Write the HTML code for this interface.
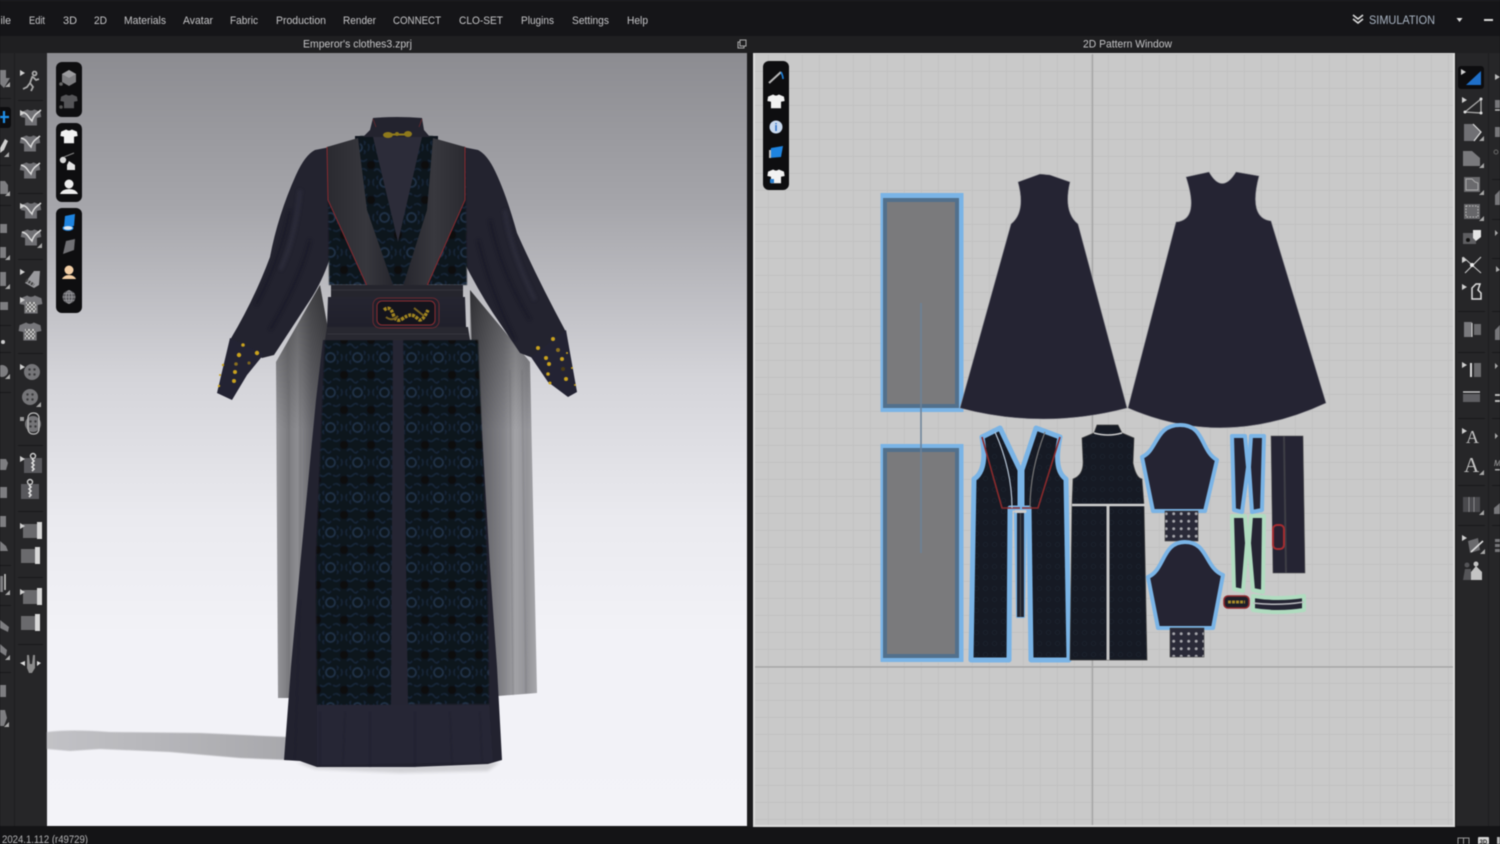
<!DOCTYPE html>
<html><head><meta charset="utf-8"><title>CLO3D</title>
<style>
html,body{margin:0;padding:0;background:#141416;width:1500px;height:844px;overflow:hidden}
svg{display:block;position:absolute;left:0;top:0;filter:blur(.4px)}
text{font-family:"Liberation Sans",sans-serif}
</style></head><body>
<svg width="1500" height="844" viewBox="0 0 1500 844" xmlns="http://www.w3.org/2000/svg">
<defs>
<filter id="sf" x="-5%" y="-5%" width="110%" height="110%"><feGaussianBlur stdDeviation=".4"/></filter>
<filter id="sf2" x="-20%" y="-20%" width="140%" height="140%"><feGaussianBlur stdDeviation="1.6"/></filter>
<linearGradient id="vp" x1="0" y1="0" x2="0" y2="1"><stop offset="0" stop-color="#8c8c91"/><stop offset=".2" stop-color="#a6a6ab"/><stop offset=".42" stop-color="#d4d4d9"/><stop offset=".6" stop-color="#eaeaef"/><stop offset=".75" stop-color="#f2f2f7"/><stop offset="1" stop-color="#f3f3f8"/></linearGradient>
<linearGradient id="capeL" x1="0" y1="0" x2="1" y2="0"><stop offset="0" stop-color="#97979b"/><stop offset=".22" stop-color="#7c7c80"/><stop offset=".4" stop-color="#8d8d91"/><stop offset=".65" stop-color="#68686d"/><stop offset="1" stop-color="#4c4c52"/></linearGradient>
<linearGradient id="capeR" x1="0" y1="0" x2="1" y2="0"><stop offset="0" stop-color="#4c4c52"/><stop offset=".3" stop-color="#6e6e73"/><stop offset=".5" stop-color="#838388"/><stop offset=".68" stop-color="#a2a2a6"/><stop offset=".85" stop-color="#929297"/><stop offset="1" stop-color="#a8a8ac"/></linearGradient>
<linearGradient id="capeTop" gradientUnits="userSpaceOnUse" x1="0" y1="285" x2="0" y2="430"><stop offset="0" stop-color="#000" stop-opacity=".38"/><stop offset="1" stop-color="#000" stop-opacity="0"/></linearGradient>
<linearGradient id="shad" x1="0" y1="0" x2="1" y2="0"><stop offset="0" stop-color="#c2c2c6"/><stop offset="1" stop-color="#a8a8ac"/></linearGradient>
<linearGradient id="lapL" x1="0" y1="0" x2="1" y2="0"><stop offset="0" stop-color="#2a2a30"/><stop offset=".6" stop-color="#37373d"/><stop offset="1" stop-color="#26262d"/></linearGradient>
<linearGradient id="lapR" x1="0" y1="0" x2="1" y2="0"><stop offset="0" stop-color="#26262d"/><stop offset=".5" stop-color="#38383e"/><stop offset="1" stop-color="#2a2a30"/></linearGradient>
<linearGradient id="belt" x1="0" y1="0" x2="0" y2="1"><stop offset="0" stop-color="#252531"/><stop offset="1" stop-color="#20202b"/></linearGradient>
<pattern id="lace" width="27" height="35" patternUnits="userSpaceOnUse" x="317" y="340">
<rect width="27" height="35" fill="#0d121b"/>
<circle cx="13.5" cy="17.5" r="4.5" fill="none" stroke="#2e4460" stroke-width="1"/>
<path d="M3 6q3-4 6 0t5 0M16 5q4-3 7 1M3 30q3 3 6 0t5 0M16 30q4 3 7-1M3 14q-2 3 0 7M24 14q2 3 0 7M7 11q-2 2 0 4M20 11q2 2 0 4M7 24q-2-2 0-4M20 24q2-2 0-4" fill="none" stroke="#213348" stroke-width=".9"/>
<circle cx="0" cy="0" r="4" fill="#070a11"/><circle cx="27" cy="0" r="4" fill="#070a11"/><circle cx="0" cy="35" r="4" fill="#070a11"/><circle cx="27" cy="35" r="4" fill="#070a11"/>
</pattern>
<pattern id="lace2" width="9" height="11" patternUnits="userSpaceOnUse">
<rect width="9" height="11" fill="#161a24"/><circle cx="4.5" cy="5.5" r="2.2" fill="none" stroke="#1c2430" stroke-width=".7"/>
</pattern>
<pattern id="dots" width="7.5" height="7.5" patternUnits="userSpaceOnUse">
<rect width="7.5" height="7.5" fill="#2a2a38"/><circle cx="3.7" cy="3.7" r="1.5" fill="#a5a5ab"/>
</pattern>
<pattern id="grid" width="17" height="17" patternUnits="userSpaceOnUse" x="3" y="3">
<rect width="17" height="17" fill="#c9c9c9"/><path d="M0 0H17M0 0V17" stroke="#bfbfbf" stroke-width="1.4"/>
</pattern>
<pattern id="chk" width="4" height="4" patternUnits="userSpaceOnUse"><rect width="4" height="4" fill="#666"/><rect width="2" height="2" fill="#ccc"/><rect x="2" y="2" width="2" height="2" fill="#ccc"/></pattern>

<path id="tl" d="M0 0L5 3 0 6Z" fill="#d0d0d0"/>
<path id="br" d="M0 5L5 5 5 0Z" fill="#a8a8a8"/>
<path id="sh" d="M-11-6L-4-9Q0-6 4-9L11-6 12 0 7 1 7 10-7 10-7 1-12 0Z"/>
<g id="nd"><use href="#sh" transform="scale(.85)" fill="#707074"/><path d="M-9-5Q-5-4-3-1T1 4Q2 0 5-3L10-7" fill="none" stroke="#dcdcdc" stroke-width="1.5"/></g>
<g id="roll"><rect x="-10" y="-7" width="14" height="14" fill="#6a6a6d"/><rect x="4" y="-9" width="5" height="17" fill="#d8d8d8"/></g>
<g id="btn"><circle r="8" fill="#757578"/><circle cx="-2.5" cy="-2.5" r="1.2" fill="#3a3a3c"/><circle cx="2.5" cy="-2.5" r="1.2" fill="#3a3a3c"/><circle cx="-2.5" cy="2.5" r="1.2" fill="#3a3a3c"/><circle cx="2.5" cy="2.5" r="1.2" fill="#3a3a3c"/></g>
<g id="zip"><rect x="-9" y="-7" width="18" height="15" fill="#58585c"/><circle cy="-9" r="2.5" fill="none" stroke="#ccc" stroke-width="1.4"/><path d="M-1-6L1-4-1-2 1 0-1 2 1 4-1 6" fill="none" stroke="#ddd" stroke-width="1.6"/></g>
<g id="csh"><use href="#sh" transform="scale(.95)" fill="#77777b"/><rect x="-5" y="-2" width="10" height="10" fill="url(#chk)"/></g>
</defs>

<!-- frame -->
<rect width="1500" height="844" fill="#141416"/>
<rect width="1500" height="36" fill="#151518"/>
<rect y="0" width="1500" height="1" fill="#202024"/>
<rect y="36" width="1500" height="17" fill="#1f1f21"/>

<!-- left toolbar -->
<rect x="0" y="53" width="47" height="773" fill="#262628"/>
<rect x="14" y="53" width="1" height="773" fill="#1d1d1f"/>
<g fill="#18181a">
<rect x="0" y="98" width="11" height="1"/><rect x="0" y="165" width="11" height="1"/><rect x="0" y="205" width="11" height="1"/><rect x="0" y="325" width="11" height="1"/><rect x="0" y="352" width="11" height="1"/><rect x="0" y="392" width="11" height="1"/><rect x="0" y="565" width="11" height="1"/><rect x="0" y="605" width="11" height="1"/><rect x="0" y="672" width="11" height="1"/>
<rect x="18" y="100" width="25" height="1"/><rect x="18" y="193" width="25" height="1"/><rect x="18" y="259" width="25" height="1"/><rect x="18" y="353" width="25" height="1"/><rect x="18" y="445" width="25" height="1"/><rect x="18" y="511" width="25" height="1"/><rect x="18" y="577" width="25" height="1"/><rect x="18" y="644" width="25" height="1"/>
</g>
<!-- column 1 -->
<rect x="-4" y="107" width="15" height="21" rx="3" fill="#0d0d0f"/>
<path d="M0 117H9M4 111V123" stroke="#1f8fe8" stroke-width="2.2"/>
<g fill="#7d7d80">
<path d="M0 70H6V78H10L4 88 0 84Z"/>
<path d="M0 148L5 139 8 141 4 150 0 153Z" fill="#cfcfcf"/>
<path d="M0 181H5L8 185V194H0Z"/>
<path d="M0 224H7V233H0Z"/><path d="M0 247H6V258H0Z"/><path d="M0 272H6V286H0Z"/><path d="M0 302H8V310H0Z"/>
<circle cx="3" cy="342" r="2" fill="#ccc"/>
<circle cx="2" cy="371" r="6"/>
<path d="M0 459H6L8 463 6 470H0Z"/><path d="M0 487H7V498H0Z"/><path d="M0 516H6V527H0Z"/><path d="M0 541L6 546 8 551H0Z"/>
<path d="M0 576H3V592H0Z"/><path d="M0 620L9 627 8 632 0 628Z"/><path d="M0 644L7 650 6 656 0 652Z"/><path d="M0 685H6V697H0Z"/><path d="M0 710H5L7 718 4 726H0Z"/>
</g>
<path d="M5 574V590" stroke="#ccc" stroke-width="1.5"/>
<g fill="#a8a8a8">
<use href="#br" x="5" y="82"/><use href="#br" x="4" y="152"/><use href="#br" x="5" y="191"/><use href="#br" x="5" y="255"/><use href="#br" x="5" y="284"/><use href="#br" x="5" y="374"/><use href="#br" x="5" y="590"/><use href="#br" x="5" y="655"/><use href="#br" x="4" y="722"/>
</g>

<!-- column 2 icons -->
<use href="#tl" x="20" y="70"/>
<path d="M34.500 71.500a2 2 0 1 0 .1 0M32.500 76L30 83 33 87 31 91M30 83L27 87 23 89M33 77L36 80 39 79" fill="none" stroke="#a8a8a8" stroke-width="1.8"/>
<use href="#nd" transform="translate(31,117)"/><use href="#tl" x="20" y="110"/>
<use href="#nd" transform="translate(30,143)"/>
<use href="#nd" transform="translate(30,170)"/>
<use href="#nd" transform="translate(31,210)"/><use href="#tl" x="20" y="203"/>
<use href="#nd" transform="translate(31,237)"/><use href="#br" x="37" y="243"/>
<use href="#tl" x="20" y="269"/>
<path d="M25 283L34 271 40 271 39 285 34 288Z" fill="#9a9a9e"/><path d="M26 280L34 285" stroke="#444" stroke-width="3" stroke-dasharray="2 1"/>
<use href="#csh" transform="translate(31,304)"/><use href="#tl" x="20" y="297"/>
<use href="#csh" transform="translate(30,331)"/>
<use href="#btn" transform="translate(32,372)"/><use href="#tl" x="20" y="364"/>
<use href="#btn" transform="translate(30,397)"/><use href="#br" x="36" y="402"/>
<use href="#btn" transform="translate(33,424)"/><rect x="28" y="413" width="11" height="21" rx="5" fill="none" stroke="#bbb" stroke-width="1.2"/>
<rect x="20" y="417" width="4" height="4" fill="#999"/>
<use href="#zip" transform="translate(33,465)"/><use href="#tl" x="20" y="456"/>
<use href="#zip" transform="translate(30,491)"/>
<use href="#roll" transform="translate(33,531)"/><use href="#tl" x="20" y="523"/>
<use href="#roll" transform="translate(31,556)"/>
<use href="#roll" transform="translate(33,597)"/><use href="#tl" x="20" y="589"/>
<use href="#roll" transform="translate(31,623)"/>
<path d="M27 655L29 655 30 664 32 664 33 655 35 655 35 668 32 673 29 673 27 668Z" fill="#8c8c8c"/><path d="M20 663L25 661V666ZM41 663L37 661V666Z" fill="#ddd"/>

<!-- 3D viewport -->
<rect x="47" y="53" width="700" height="773" fill="url(#vp)"/>
<path d="M47 732Q70 729 110 732L200 733 288 737V760L240 758 170 752 100 749 70 751 47 749Z" fill="url(#shad)" filter="url(#sf)"/>
<path d="M296 762H500L488 771 400 773 315 769Z" fill="#d0d0d4" filter="url(#sf2)"/>

<!-- capes -->
<path d="M320 285L276 362 278 698 296 698 330 340Z" fill="url(#capeL)"/>
<path d="M470 290L530 362 537 693 498 696 480 600Z" fill="url(#capeR)"/>
<path d="M320 285L276 362 277 430H330V340ZM470 290L530 362 532 430H470Z" fill="url(#capeTop)"/>
<path d="M289 380V697M300 360V697M510 370L513 695M522 370L526 693" stroke="#5f5f64" stroke-width="1.2" opacity=".3" filter="url(#sf)"/>

<!-- robe -->
<path d="M323 340L472 340 480 400 490 567 497 667 502 760 488 764 413 767 317 767 300 761 284 760 291 667 300 567 316 400Z" fill="#22222f"/>
<g filter="url(#sf)">
<path d="M325 340H393V705H317L316 560Z" fill="url(#lace)"/>
<path d="M403 340H478L487 560 489 704H405Z" fill="url(#lace)"/>
</g>
<path d="M393 340H403L408 705H391Z" fill="#252533"/>
<path d="M317 705H489L493 762 317 765Z" fill="#262635"/>
<path d="M320 712V765M345 712L343 765M370 712V767M415 712V767M450 712L452 765M480 712L482 762M300 600L295 760" stroke="#1c1c2a" stroke-width="1.5" opacity=".35" filter="url(#sf)"/>

<!-- sleeves -->
<path d="M315 150L330 147 330 258Q322 282 310 300L274 355 262 358 230 340Q254 300 270 257 278 215 296 175 305 155 315 150Z" fill="#23232f"/>
<path d="M478 150L463 147 463 260Q478 290 493 313L520 353 533 358 566 332Q538 280 517 233 505 190 493 167 486 154 478 150Z" fill="#23232f"/>
<path d="M290 210Q280 260 256 305M310 240Q300 280 270 330M490 220Q500 270 530 320M478 240Q490 290 515 340" stroke="#191923" stroke-width="3" fill="none" opacity=".6" filter="url(#sf2)"/>
<path d="M300 190Q295 240 280 270M505 210Q510 250 535 300" stroke="#2e2e3c" stroke-width="4" fill="none" opacity=".8" filter="url(#sf2)"/>
<path d="M230 338L264 354 247 375 232 400 217 393Z" fill="#232333"/>
<path d="M531 357L566 330 577 392 568 397 548 382Z" fill="#232333"/>
<g fill="#c9a21e">
<circle cx="239" cy="355" r="2.2"/><circle cx="243" cy="345" r="1.8"/><circle cx="257" cy="353" r="2.2"/><circle cx="235" cy="372" r="2"/><circle cx="234" cy="381" r="2"/><circle cx="249" cy="363" r="1.6" fill="#7a6420"/><circle cx="223" cy="365" r="1.2"/><circle cx="219" cy="386" r="1.2"/><circle cx="236" cy="364" r="1.8" fill="#8a7020"/><circle cx="220" cy="375" r="1"/>
<circle cx="538" cy="348" r="2"/><circle cx="553" cy="339" r="2"/><circle cx="558" cy="350" r="2" fill="#8a7020"/><circle cx="562" cy="359" r="2"/><circle cx="546" cy="358" r="2"/><circle cx="549" cy="364" r="2"/><circle cx="563" cy="369" r="2" fill="#4a3c14"/><circle cx="566" cy="379" r="2"/><circle cx="548" cy="374" r="1.8"/><circle cx="550" cy="383" r="1.5"/><circle cx="575" cy="385" r="1"/><circle cx="567" cy="353" r="1"/><circle cx="572" cy="368" r="1"/>
</g>

<!-- torso -->
<path d="M355 136H438V152H355Z" fill="#10151e"/>
<g filter="url(#sf)">
<path d="M328 147H465L467 285H329Z" fill="url(#lace)"/>
<path d="M360 136H433V160H360Z" fill="url(#lace)"/>
</g>
<path d="M373 118Q397 116 422 118L424 130 430 137 363 137 370 130Z" fill="#23232e"/>
<path d="M373 137H422L398 242Z" fill="#2c2c39"/>
<path d="M373 119L376 127M422 119L419 127" stroke="#6a2a30" stroke-width=".8"/>
<path d="M327 147L358 138 367 210 393 285 367 286 328 200Z" fill="url(#lapL)"/>
<path d="M433 138L465 147 465 200 427 286 403 286 427 210Z" fill="url(#lapR)"/>
<path d="M327 147L328 200 367 286M465 147L465 200 427 286" fill="none" stroke="#8a2a30" stroke-width="1"/>
<g fill="#8f7a1c"><ellipse cx="388" cy="135" rx="5" ry="3"/><ellipse cx="408" cy="134" rx="4" ry="3"/><rect x="392" y="133.500" width="13" height="2"/><circle cx="397" cy="134" r="2"/></g>

<!-- belt -->
<rect x="331" y="285" width="132" height="12" fill="#25252d"/>
<path d="M328 297H465L466 327H327Z" fill="url(#belt)"/>
<path d="M327 327H468L470 340H325Z" fill="#282830"/>
<path d="M331 290H463M327 334H468" stroke="#34343c" stroke-width="1"/>
<rect x="373" y="298" width="66" height="30" rx="7" fill="#1f1f2a" stroke="#6a2a30" stroke-width="1"/>
<rect x="377" y="301" width="58" height="24" rx="5" fill="#14141c" stroke="#8a2c32" stroke-width="1"/>
<path d="M384 310Q390 305 393 314T402 319 411 315 418 319 428 310" fill="none" stroke="#a08420" stroke-width="3.5" stroke-dasharray="3 1"/>
<path d="M386 317Q392 322 398 316M414 308L424 316" fill="none" stroke="#7a6420" stroke-width="2"/>

<!-- gap / 2D tab -->
<rect x="747" y="53" width="6" height="774" fill="#1a1a1c"/>

<!-- 2D window -->
<rect x="753" y="53" width="702" height="774" fill="#dcdcdc"/>
<rect x="755" y="54" width="698" height="771" fill="url(#grid)"/>
<path d="M1092.500 54V825M755 667H1453" stroke="#a2a2a2" stroke-width="1.2"/>

<!-- rects -->
<g>
<rect x="880.500" y="193" width="83" height="219" fill="#7ab4e6"/>
<rect x="883" y="198" width="76" height="210" fill="#52708c"/>
<rect x="887" y="202" width="68" height="202" fill="#7a7a7c"/>
<rect x="880.500" y="444" width="83" height="218" fill="#7ab4e6"/>
<rect x="883" y="448" width="76" height="210" fill="#52708c"/>
<rect x="887" y="452" width="68" height="202" fill="#7a7a7c"/>
<path d="M921 303V553" stroke="#6a8299" stroke-width="1.5"/>
</g>

<!-- dresses -->
<path d="M1018 182L1040 174 1050 175 1070 182Q1063 212 1078 224L1127 408Q1043 430 960 408L1011 224Q1026 212 1018 182Z" fill="#252433" stroke="#8a8a90" stroke-width=".6"/>
<path d="M1186 177L1209 172Q1222 195 1236 172L1259 176Q1248 218 1271 221L1326 403Q1225 450 1128 408L1176 222Q1200 220 1186 177Z" fill="#252433" stroke="#8a8a90" stroke-width=".6"/>

<!-- vest -->
<g stroke="#7ab4e6" stroke-width="5" stroke-linejoin="round">
<path d="M982 437L1000 428 1020 470V508H1010L1009 660H971L974 479Q988 470 982 437Z" fill="url(#lace2)"/>
<path d="M1060 437L1036 428 1022 470V508H1029L1031 660H1069L1066 479Q1053 470 1060 437Z" fill="url(#lace2)"/>
<path d="M1015 513H1026L1024 617H1017Z" fill="#7ab4e6" stroke-width="2"/>
</g>
<rect x="1017" y="513" width="7" height="104" fill="#1e2330"/>
<path d="M1020.500 513V617" stroke="#555" stroke-width=".8"/>
<rect x="1015" y="510" width="11" height="3" fill="#ccc"/>
<path d="M982 437L1002 508H1020M1060 437L1038 508H1022" fill="none" stroke="#8a2a2c" stroke-width="1.6"/>
<path d="M995 432Q1012 470 1012 508" fill="none" stroke="#b5c4d5" stroke-width="1.2"/>
<path d="M1045 432Q1030 470 1030 508" fill="none" stroke="#777" stroke-width="1.2"/>

<!-- back -->
<path d="M1097 425H1118L1122 433 1134 438 1133 463Q1136 478 1142 479L1144 505 1147 660H1070L1072 505 1073 479Q1084 475 1083 460L1082 438 1094 433Z" fill="url(#lace2)" stroke="#444" stroke-width=".7"/>
<path d="M1094 433Q1108 437 1122 433" stroke="#ccc" stroke-width="1.5" fill="none"/>
<path d="M1072 505H1145" stroke="#d0d0d0" stroke-width="2.6"/>
<path d="M1108 506V660" stroke="#c4c4c4" stroke-width="3"/>

<!-- sleeves -->
<path d="M1142 457C1158 450 1155 425 1180 425C1205 425 1200 450 1217 460L1205 511H1153Z" fill="#252433" stroke="#7ab4e6" stroke-width="4" stroke-linejoin="round"/>
<rect x="1165" y="511" width="33" height="30" fill="url(#dots)" stroke="#444" stroke-width=".6"/>
<path d="M1148 577C1165 570 1162 542 1185 542C1208 542 1205 568 1223 575L1213 628H1158Z" fill="#252433" stroke="#7ab4e6" stroke-width="4" stroke-linejoin="round"/>
<rect x="1170" y="628" width="34" height="29" fill="url(#dots)" stroke="#444" stroke-width=".6"/>

<!-- right small parts -->
<g fill="#252433">
<g stroke="#7ab4e6" stroke-width="4" stroke-linejoin="round">
<path d="M1232 436H1245L1248 467 1242 512 1234 510Z"/>
<path d="M1251 436H1264L1262 510 1252 512 1249 467Z"/>
</g>
<g stroke="#b0dcc0" stroke-width="4" stroke-linejoin="round">
<path d="M1232 516H1245L1247 543 1243 591 1234 589Z"/>
<path d="M1251 516H1264L1263 592 1253 590 1249 543Z"/>
<path d="M1253 596Q1278 600 1304 596V610Q1278 614 1253 610Z"/>
</g>
<path d="M1271 436H1303L1305 573H1273Z" stroke="#555" stroke-width=".6"/>
</g>
<path d="M1284 436L1286 573" stroke="#3e3e46" stroke-width="2"/>
<path d="M1253 603Q1278 606 1304 602" stroke="#bcbcc0" stroke-width="1.5" fill="none"/>
<rect x="1273" y="525" width="11" height="24" rx="4" fill="#2a2030" stroke="#a52c30" stroke-width="2"/>
<rect x="1224" y="596" width="25" height="12" rx="4" fill="#1e1e28" stroke="#8f2a2e" stroke-width="1.6"/>
<path d="M1228 602H1245" stroke="#a88a2a" stroke-width="3" stroke-dasharray="3 1"/>

<!-- 3D floating toolbars -->
<g fill="#0e0e10">
<rect x="56" y="62" width="26" height="55" rx="6"/><rect x="56" y="123" width="26" height="79" rx="6"/><rect x="56" y="208" width="26" height="105" rx="6"/>
</g>
<path d="M69 70L76 74V82L69 86 62 82V74Z" fill="#7d7d80"/><path d="M69 70L76 74 69 78 62 74Z" fill="#9c9c9f"/><circle cx="61" cy="84" r="1.8" fill="#666"/>
<use href="#sh" transform="translate(69,101) scale(.72)" fill="#555558"/><circle cx="61" cy="107" r="1.8" fill="#555"/>
<use href="#sh" transform="translate(69,136) scale(.72)" fill="#f2f2f2"/>
<circle cx="63" cy="160" r="3.2" fill="#d8d8d8"/><path d="M69 161L75 165V170H67V165Z" fill="#e4e4e4"/><path d="M64 157L74 153" stroke="#888" stroke-width="1"/>
<circle cx="69" cy="184" r="4.500" fill="#eee"/><path d="M60 194Q62 189 69 189T78 194Z" fill="#eee"/>
<path d="M65 216L75 214 74 226 64 227Z" fill="#1e84e0"/><ellipse cx="68" cy="228" rx="5" ry="2.4" fill="#dfe9f2" stroke="#1e84e0"/>
<path d="M66 241L75 239 74 250 63 254Z" fill="#707074"/>
<circle cx="69" cy="270" r="4.500" fill="#f4cfa6"/><path d="M62 279Q64 275 69 275T76 279Z" fill="#f4cfa6"/>
<circle cx="69" cy="297" r="6.500" fill="#5a5a5e"/><g fill="none" stroke="#9a9a9e" stroke-width=".8"><ellipse cx="69" cy="297" rx="3" ry="6.500"/><path d="M62.500 297H75.500M63.500 293.500H74.500M63.500 300.500H74.500M69 290.500V303.500"/></g>

<!-- 2D floating toolbar -->
<rect x="763" y="61" width="26" height="129" rx="6" fill="#0e0e10"/>
<path d="M769 83L781 72" stroke="#b8b8b8" stroke-width="2"/><path d="M781 72Q783 76 783 79" stroke="#1e84e0" stroke-width="1.6" fill="none"/>
<use href="#sh" transform="translate(776,101) scale(.72)" fill="#f2f2f2"/>
<circle cx="776" cy="127" r="6.500" fill="#c9d9ee"/><text x="776" y="131" font-size="11" font-weight="bold" fill="#2b6fc8" text-anchor="middle">i</text>
<path d="M771 148L783 146 781 157 769 158Z" fill="#1e84e0"/><path d="M769 150H771V158H769Z" fill="#bbb"/>
<use href="#sh" transform="translate(776,176) scale(.72)" fill="#f2f2f2"/><rect x="770" y="179" width="4" height="4" fill="#2a7fd0"/>

<!-- right toolbar -->
<rect x="1456" y="53" width="44" height="773" fill="#262628"/>
<rect x="1488" y="53" width="1" height="773" fill="#1d1d1f"/>
<g fill="#18181a">
<rect x="1458" y="311" width="27" height="1"/><rect x="1458" y="352" width="27" height="1"/><rect x="1458" y="418" width="27" height="1"/><rect x="1458" y="485" width="27" height="1"/><rect x="1458" y="525" width="27" height="1"/>
<rect x="1492" y="179" width="8" height="1"/><rect x="1492" y="219" width="8" height="1"/><rect x="1492" y="258" width="8" height="1"/><rect x="1492" y="311" width="8" height="1"/><rect x="1492" y="352" width="8" height="1"/><rect x="1492" y="418" width="8" height="1"/><rect x="1492" y="485" width="8" height="1"/><rect x="1492" y="525" width="8" height="1"/>
</g>
<rect x="1458" y="66" width="26" height="23" rx="3" fill="#0d0d0f"/>
<path d="M1466 85L1481 71V85Z" fill="#1f6fc8"/><use href="#tl" x="1461" y="69"/>
<use href="#tl" x="1462" y="97"/><path d="M1465 112L1481 99V113Z" fill="none" stroke="#aaa" stroke-width="1.3"/><circle cx="1481" cy="99" r="1.5" fill="#ddd"/><circle cx="1481" cy="113" r="1.5" fill="#ddd"/><circle cx="1465" cy="112" r="1.5" fill="#ddd"/>
<path d="M1464 124H1473L1481 132 1474 141H1464Z" fill="#707074"/><path d="M1473 124L1481 132 1474 141" fill="none" stroke="#ddd" stroke-width="1.2"/><use href="#br" x="1479" y="136"/>
<path d="M1463 151H1472L1480 158V166H1463Z" fill="#79797c"/><use href="#br" x="1479" y="163"/>
<rect x="1464" y="177" width="16" height="15" fill="#6a6a6d"/><path d="M1466 179H1472L1475 182 1478 183V190H1466Z" fill="none" stroke="#aaa"/><use href="#br" x="1479" y="190"/>
<rect x="1464" y="204" width="16" height="15" fill="#666669"/><rect x="1466" y="206" width="12" height="11" fill="none" stroke="#bbb" stroke-dasharray="1.500 1.500"/><use href="#br" x="1479" y="216"/>
<rect x="1463" y="233" width="13" height="11" fill="#5e5e61"/><path d="M1473 230H1481V237L1476 241 1473 238Z" fill="#e4e4e4"/><circle cx="1468" cy="240" r="2" fill="#111"/>
<use href="#tl" x="1462" y="257"/><path d="M1463 257L1481 273M1481 257L1465 273" stroke="#c8c8c8" stroke-width="1.1"/><circle cx="1472" cy="265" r="2" fill="#eee"/>
<use href="#tl" x="1462" y="284"/><path d="M1472 299V288L1476 284H1480L1478 290 1481 293V299Z" fill="none" stroke="#ddd" stroke-width="1.5"/>
<rect x="1464" y="322" width="8" height="15" fill="#7a7a7d"/><rect x="1474" y="324" width="7" height="11" fill="#6a6a6d"/><path d="M1472 323V337" stroke="#ddd" stroke-width="1"/>
<use href="#tl" x="1462" y="362"/><path d="M1471 363V377" stroke="#ddd" stroke-width="2"/><rect x="1474" y="363" width="7" height="14" fill="#6a6a6d"/>
<rect x="1463" y="394" width="17" height="8" fill="#5f5f63"/><path d="M1463 392H1480" stroke="#ddd" stroke-width="1.2"/>
<use href="#tl" x="1462" y="428"/><text x="1466" y="443" font-size="18" fill="#c4c4c4" style="font-family:'Liberation Serif',serif">A</text>
<text x="1464" y="472" font-size="21" fill="#c4c4c4" style="font-family:'Liberation Serif',serif">A</text><use href="#br" x="1479" y="470"/>
<rect x="1463" y="497" width="17" height="15" fill="#4a4a4d"/><path d="M1469 497V512M1474 497V512" stroke="#8a8a8d" stroke-width="1"/><use href="#br" x="1479" y="510"/>
<use href="#tl" x="1462" y="535"/><path d="M1468 541L1478 538 1480 550 1470 553Z" fill="#6a6a6d"/><path d="M1471 552L1483 541" stroke="#ddd" stroke-width="1.6"/><use href="#br" x="1480" y="549"/>
<path d="M1463 580L1465 569H1471V580Z" fill="#555558"/><path d="M1471 580V572L1476 566 1482 572V580Z" fill="#c4c4c4"/><circle cx="1467" cy="565" r="2.5" fill="#555558"/><circle cx="1476" cy="564" r="2.5" fill="#c4c4c4"/>
<g fill="#77777a">
<path d="M1495 74L1500 77 1495 80Z" fill="#bbb"/><rect x="1495" y="100" width="5" height="8"/><path d="M1495 110H1500" stroke="#bbb" stroke-width="1.500"/>
<rect x="1495" y="127" width="5" height="10"/><circle cx="1496" cy="152" r="2" fill="none" stroke="#666"/><path d="M1495 195L1500 190V205H1495Z"/>
<path d="M1495 230L1498 233 1495 236Z" fill="#aaa"/><path d="M1496 266L1500 270 1496 272Z" fill="#aaa"/>
<path d="M1495 330L1500 325V340H1495Z"/><path d="M1495 363L1498 366 1495 369Z" fill="#aaa"/><rect x="1495" y="394" width="5" height="2" fill="#bbb"/><rect x="1495" y="400" width="5" height="2" fill="#bbb"/>
<path d="M1495 433L1498 436 1495 439Z" fill="#aaa"/><text x="1494" y="466" font-size="8" font-style="italic" fill="#aaa">M</text><rect x="1495" y="469" width="5" height="1.500" fill="#aaa"/>
<path d="M1494 508L1500 503V514H1494Z"/><rect x="1495" y="539" width="5" height="3"/><rect x="1495" y="544" width="5" height="3"/><rect x="1495" y="549" width="5" height="3"/>
</g>

<!-- menu text -->
<g font-size="11" fill="#c6c6c8">
<text x="-6" y="24" textLength="17" lengthAdjust="spacingAndGlyphs">File</text>
<text x="29" y="24" textLength="16" lengthAdjust="spacingAndGlyphs">Edit</text>
<text x="63" y="24" textLength="14" lengthAdjust="spacingAndGlyphs">3D</text>
<text x="94" y="24" textLength="13" lengthAdjust="spacingAndGlyphs">2D</text>
<text x="124" y="24" textLength="42" lengthAdjust="spacingAndGlyphs">Materials</text>
<text x="183" y="24" textLength="30" lengthAdjust="spacingAndGlyphs">Avatar</text>
<text x="230" y="24" textLength="28" lengthAdjust="spacingAndGlyphs">Fabric</text>
<text x="276" y="24" textLength="50" lengthAdjust="spacingAndGlyphs">Production</text>
<text x="343" y="24" textLength="33" lengthAdjust="spacingAndGlyphs">Render</text>
<text x="393" y="24" textLength="48" lengthAdjust="spacingAndGlyphs">CONNECT</text>
<text x="459" y="24" textLength="44" lengthAdjust="spacingAndGlyphs">CLO-SET</text>
<text x="521" y="24" textLength="33" lengthAdjust="spacingAndGlyphs">Plugins</text>
<text x="572" y="24" textLength="37" lengthAdjust="spacingAndGlyphs">Settings</text>
<text x="627" y="24" textLength="21" lengthAdjust="spacingAndGlyphs">Help</text>
<text x="303" y="47.500" textLength="109" lengthAdjust="spacingAndGlyphs">Emperor's clothes3.zprj</text>
<text x="1083" y="47.500" textLength="89" lengthAdjust="spacingAndGlyphs">2D Pattern Window</text>
<text x="1369" y="24" textLength="66" lengthAdjust="spacingAndGlyphs" font-size="11.500" fill="#a9b4c2">SIMULATION</text>
<text x="2" y="843" textLength="86" lengthAdjust="spacingAndGlyphs" fill="#b4b4b6">2024.1.112 (r49729)</text>
</g>
<path d="M1353 15L1358 19 1363 15M1353 19L1358 23 1363 19" fill="none" stroke="#dcdcdc" stroke-width="1.6"/>
<path d="M1456.500 18H1462.500L1459.500 22Z" fill="#dcdcdc"/>
<rect x="1484" y="19" width="9" height="2" fill="#d8d8d8"/>
<rect x="738" y="42" width="6" height="6" fill="none" stroke="#aaa"/><rect x="740" y="40" width="6" height="6" fill="#1f1f21" stroke="#aaa"/>
<!-- status icons -->
<rect x="1458" y="838" width="11" height="8" fill="none" stroke="#999"/><path d="M1463.500 838V846" stroke="#999"/>
<rect x="1478" y="837" width="11" height="9" rx="1" fill="#d4d4d4"/><text x="1479.500" y="844" font-size="6" font-weight="bold" fill="#222">3D</text>
<rect x="1497" y="837" width="5" height="9" fill="#b8b8b8"/>
</svg>
</body></html>
